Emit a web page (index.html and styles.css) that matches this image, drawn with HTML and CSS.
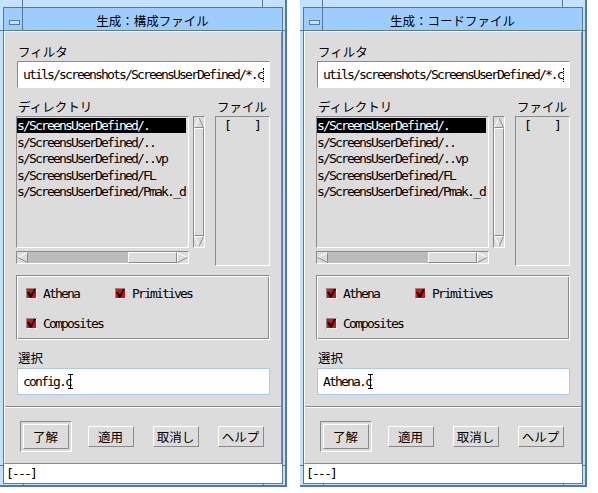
FILE: index.html
```html
<!DOCTYPE html>
<html lang="ja">
<head>
<meta charset="utf-8">
<title>生成</title>
<link rel="stylesheet" href="styles.css">
</head>
<body>
<div class="desk">

  <div class="win">
    <span class="notch nt1"></span><span class="notch nt2"></span>
    <span class="notch nb1"></span><span class="notch nb2"></span>
    <span class="notch nl1"></span><span class="notch nr1"></span>
    <span class="notch nl2"></span><span class="notch nr2"></span>
    <div class="frame">
      <div class="titlebar">
        <div class="menubtn"><span class="menubar"></span></div>
        <div class="title">生成：構成ファイル</div>
      </div>
      <div class="client">
        <div class="work">
          <div class="label lab-filter">フィルタ</div>
          <div class="field"><span class="mono">utils/screenshots/ScreensUserDefined/*.c</span><span class="caret-dot"></span></div>
          <div class="lists">
            <div class="dircol">
              <div class="label lab-col">ディレクトリ</div>
              <div class="dirrow">
                <div class="listbox dirlist">
                  <div class="row sel">s/ScreensUserDefined/.</div>
                  <div class="row">s/ScreensUserDefined/..</div>
                  <div class="row">s/ScreensUserDefined/..vp</div>
                  <div class="row">s/ScreensUserDefined/FL</div>
                  <div class="row">s/ScreensUserDefined/Pmak._d</div>
                </div>
                <div class="vscroll">
                  <svg class="arrow" width="10" height="11" viewBox="0 0 10 11"><polygon points="5,1 9.5,10.5 0.5,10.5" fill="#dcdcdc"/><polyline points="0.5,10.5 5,0.8" stroke="#fff" fill="none"/><polyline points="5,0.8 9.5,10.5 0.5,10.5" stroke="#8a8a8a" fill="none"/></svg>
                  <div class="vthumb"></div>
                  <svg class="arrow" width="10" height="11" viewBox="0 0 10 11"><polygon points="0.5,0.5 9.5,0.5 5,10" fill="#dcdcdc"/><polyline points="9.5,0.5 0.5,0.5 5,10.2" stroke="#fff" fill="none"/><polyline points="5,10.2 9.5,0.5" stroke="#8a8a8a" fill="none"/></svg>
                </div>
              </div>
              <div class="hscroll">
                <svg class="arrow" width="11" height="11" viewBox="0 0 11 11"><polygon points="0.8,5.5 10.5,0.5 10.5,10.5" fill="#dcdcdc"/><polyline points="10.5,0.5 0.8,5.5" stroke="#fff" fill="none"/><polyline points="0.8,5.5 10.5,10.5 10.5,0.5" stroke="#8a8a8a" fill="none"/></svg>
                <div class="htrough"><div class="hthumb"></div></div>
                <svg class="arrow" width="11" height="11" viewBox="0 0 11 11"><polygon points="0.5,0.5 10.2,5.5 0.5,10.5" fill="#dcdcdc"/><polyline points="0.5,10.5 0.5,0.5 10.2,5.5" stroke="#fff" fill="none"/><polyline points="10.2,5.5 0.5,10.5" stroke="#8a8a8a" fill="none"/></svg>
              </div>
            </div>
            <div class="filecol">
              <div class="label lab-col">ファイル</div>
              <div class="listbox filelist"><div class="frow">[    ]</div></div>
            </div>
          </div>
          <div class="types">
            <div class="chk"><span class="box"><svg width="9" height="9" viewBox="0 0 9 9"><polygon points="0,3 2.2,3 3.6,5.6 7,0 9,0 4.6,8.5 2.8,8.5" fill="#000"/></svg></span><span class="mono">Athena</span></div>
            <div class="chk"><span class="box"><svg width="9" height="9" viewBox="0 0 9 9"><polygon points="0,3 2.2,3 3.6,5.6 7,0 9,0 4.6,8.5 2.8,8.5" fill="#000"/></svg></span><span class="mono">Primitives</span></div>
            <div class="chk"><span class="box"><svg width="9" height="9" viewBox="0 0 9 9"><polygon points="0,3 2.2,3 3.6,5.6 7,0 9,0 4.6,8.5 2.8,8.5" fill="#000"/></svg></span><span class="mono">Composites</span></div>
          </div>
          <div class="label lab-sel">選択</div>
          <div class="field focus"><span class="mono">config.c</span><svg class="ibeam" width="5" height="15" viewBox="0 0 5 15"><path d="M0 0.5H5M0 14.5H5M2.5 0.5V14.5" stroke="#000" fill="none"/></svg></div>
        </div>
        <div class="buttons">
          <div class="cell"><div class="defwrap"><div class="btn btn-def">了解</div></div></div>
          <div class="cell"><div class="btn">適用</div></div>
          <div class="cell"><div class="btn">取消し</div></div>
          <div class="cell"><div class="btn">ヘルプ</div></div>
        </div>
      </div>
      <div class="status"><span class="mono">[---]</span></div>
    </div>
  </div>

  <div class="win">
    <span class="notch nt1"></span><span class="notch nt2"></span>
    <span class="notch nb1"></span><span class="notch nb2"></span>
    <span class="notch nl1"></span><span class="notch nr1"></span>
    <span class="notch nl2"></span><span class="notch nr2"></span>
    <div class="frame">
      <div class="titlebar">
        <div class="menubtn"><span class="menubar"></span></div>
        <div class="title">生成：コードファイル</div>
      </div>
      <div class="client">
        <div class="work">
          <div class="label lab-filter">フィルタ</div>
          <div class="field"><span class="mono">utils/screenshots/ScreensUserDefined/*.c</span><span class="caret-dot"></span></div>
          <div class="lists">
            <div class="dircol">
              <div class="label lab-col">ディレクトリ</div>
              <div class="dirrow">
                <div class="listbox dirlist">
                  <div class="row sel">s/ScreensUserDefined/.</div>
                  <div class="row">s/ScreensUserDefined/..</div>
                  <div class="row">s/ScreensUserDefined/..vp</div>
                  <div class="row">s/ScreensUserDefined/FL</div>
                  <div class="row">s/ScreensUserDefined/Pmak._d</div>
                </div>
                <div class="vscroll">
                  <svg class="arrow" width="10" height="11" viewBox="0 0 10 11"><polygon points="5,1 9.5,10.5 0.5,10.5" fill="#dcdcdc"/><polyline points="0.5,10.5 5,0.8" stroke="#fff" fill="none"/><polyline points="5,0.8 9.5,10.5 0.5,10.5" stroke="#8a8a8a" fill="none"/></svg>
                  <div class="vthumb"></div>
                  <svg class="arrow" width="10" height="11" viewBox="0 0 10 11"><polygon points="0.5,0.5 9.5,0.5 5,10" fill="#dcdcdc"/><polyline points="9.5,0.5 0.5,0.5 5,10.2" stroke="#fff" fill="none"/><polyline points="5,10.2 9.5,0.5" stroke="#8a8a8a" fill="none"/></svg>
                </div>
              </div>
              <div class="hscroll">
                <svg class="arrow" width="11" height="11" viewBox="0 0 11 11"><polygon points="0.8,5.5 10.5,0.5 10.5,10.5" fill="#dcdcdc"/><polyline points="10.5,0.5 0.8,5.5" stroke="#fff" fill="none"/><polyline points="0.8,5.5 10.5,10.5 10.5,0.5" stroke="#8a8a8a" fill="none"/></svg>
                <div class="htrough"><div class="hthumb"></div></div>
                <svg class="arrow" width="11" height="11" viewBox="0 0 11 11"><polygon points="0.5,0.5 10.2,5.5 0.5,10.5" fill="#dcdcdc"/><polyline points="0.5,10.5 0.5,0.5 10.2,5.5" stroke="#fff" fill="none"/><polyline points="10.2,5.5 0.5,10.5" stroke="#8a8a8a" fill="none"/></svg>
              </div>
            </div>
            <div class="filecol">
              <div class="label lab-col">ファイル</div>
              <div class="listbox filelist"><div class="frow">[    ]</div></div>
            </div>
          </div>
          <div class="types">
            <div class="chk"><span class="box"><svg width="9" height="9" viewBox="0 0 9 9"><polygon points="0,3 2.2,3 3.6,5.6 7,0 9,0 4.6,8.5 2.8,8.5" fill="#000"/></svg></span><span class="mono">Athena</span></div>
            <div class="chk"><span class="box"><svg width="9" height="9" viewBox="0 0 9 9"><polygon points="0,3 2.2,3 3.6,5.6 7,0 9,0 4.6,8.5 2.8,8.5" fill="#000"/></svg></span><span class="mono">Primitives</span></div>
            <div class="chk"><span class="box"><svg width="9" height="9" viewBox="0 0 9 9"><polygon points="0,3 2.2,3 3.6,5.6 7,0 9,0 4.6,8.5 2.8,8.5" fill="#000"/></svg></span><span class="mono">Composites</span></div>
          </div>
          <div class="label lab-sel">選択</div>
          <div class="field focus"><span class="mono">Athena.c</span><svg class="ibeam" width="5" height="15" viewBox="0 0 5 15"><path d="M0 0.5H5M0 14.5H5M2.5 0.5V14.5" stroke="#000" fill="none"/></svg></div>
        </div>
        <div class="buttons">
          <div class="cell"><div class="defwrap"><div class="btn btn-def">了解</div></div></div>
          <div class="cell"><div class="btn">適用</div></div>
          <div class="cell"><div class="btn">取消し</div></div>
          <div class="cell"><div class="btn">ヘルプ</div></div>
        </div>
      </div>
      <div class="status"><span class="mono">[---]</span></div>
    </div>
  </div>

</div>
</body>
</html>
```

FILE: styles.css
```css
* { box-sizing: border-box; }

body {
  margin: 0;
  background: #fff;
  color: #000;
  font-family: "Noto Sans CJK JP", "Noto Sans", sans-serif;
  font-size: 12px;
}

.desk {
  display: flex;
  align-items: flex-start;
  gap: 13px;
}

.mono {
  font-family: "DejaVu Sans Mono", "Liberation Mono", monospace;
  font-size: 13px;
  letter-spacing: -1.83px;
  white-space: pre;
}

/* ---------- window frame ---------- */
.win {
  position: relative;
  width: 287px;
  height: 487px;
  background: #c4e2fd;
  padding: 7px 2px 1px 3px;
  border-right: 2px solid #56799f;
  border-bottom: 2px solid #56799f;
}

.notch { position: absolute; background: #56799f; }
.nt1 { left: 22px; top: 0; width: 1px; height: 7px; }
.nt2 { left: 262px; top: 0; width: 1px; height: 7px; }
.nb1 { left: 23px; top: 484px; width: 1px; height: 3px; }
.nb2 { left: 263px; top: 484px; width: 1px; height: 3px; }
.nl1 { left: 0; top: 30px; width: 3px; height: 1px; }
.nr1 { left: 283px; top: 30px; width: 2px; height: 1px; }
.nl2 { left: 0; top: 465px; width: 3px; height: 1px; }
.nr2 { left: 283px; top: 465px; width: 2px; height: 1px; }

.frame {
  height: 100%;
  border: 1px solid #56799f;
  display: flex;
  flex-direction: column;
}

.titlebar {
  height: 23px;
  flex: 0 0 auto;
  display: flex;
  background: #9ccdfd;
  border-bottom: 1px solid #56799f;
}

.menubtn {
  width: 19px;
  border-right: 1px solid #56799f;
  display: flex;
  justify-content: center;
  padding-left: 3px;
}

.menubar {
  margin-top: 12px;
  width: 11px;
  height: 5px;
  background: #c4e2fd;
  border: 1px solid #56799f;
}

.title {
  flex: 1;
  text-align: center;
  padding-top: 3px;
  line-height: 19px;
  font-size: 12.5px;
}

/* ---------- client area ---------- */
.client {
  height: 433px;
  flex: 0 0 auto;
  background: #dcdcdc;
  border: 1px solid;
  border-color: #fff #8a8a8a #8a8a8a #fff;
  display: flex;
  flex-direction: column;
}

.work {
  height: 375px;
  padding-top: 13px;
  border-bottom: 1px solid #8a8a8a;
}

.label {
  font-size: 12.5px;
  line-height: 14px;
  height: 14px;
}

.lab-filter { margin-left: 13px; }
.lab-col { margin-left: 2px; margin-bottom: 2px; }
.lab-sel { margin: 11px 0 0 13px; }

.field {
  margin: 2px 11px 0 12px;
  height: 27px;
  background: #fff;
  border: 1px solid;
  border-color: #8a8a8a #fff #fff #8a8a8a;
  padding-left: 5px;
  display: flex;
  align-items: center;
  overflow: hidden;
}

.field.focus {
  margin-top: 3px;
  border-color: #a6cbef;
}

.caret-dot {
  width: 1px;
  height: 14px;
  border-left: 1px dotted #000;
}

.ibeam { margin-left: -3px; flex: 0 0 auto; }

/* ---------- lists ---------- */
.lists {
  display: flex;
  margin: 12px 0 0 11px;
}

.dircol { width: 189px; }

.dirrow { display: flex; }

.listbox {
  background: #dcdcdc;
  border: 1px solid;
  border-color: #8a8a8a #fff #fff #8a8a8a;
  overflow: hidden;
}

.dirlist {
  width: 173px;
  height: 132px;
  padding-top: 1px;
}

.row {
  height: 15px;
  line-height: 15px;
  margin: 0 2px 1.5px 0;
  font-family: "DejaVu Sans Mono", "Liberation Mono", monospace;
  font-size: 13px;
  letter-spacing: -1.83px;
  white-space: pre;
}

.row.sel { background: #000; color: #fff; }

.vscroll {
  margin-left: 4px;
  width: 12px;
  height: 132px;
  border: 1px solid;
  border-color: #8a8a8a #fff #fff #8a8a8a;
  display: flex;
  flex-direction: column;
}

.arrow { display: block; flex: 0 0 auto; }

.vthumb {
  flex: 1;
  border: 1px solid;
  border-color: #fff #8a8a8a #8a8a8a #fff;
}

.hscroll {
  margin-top: 3px;
  width: 173px;
  height: 13px;
  border: 1px solid;
  border-color: #8a8a8a #fff #fff #8a8a8a;
  display: flex;
}

.htrough {
  flex: 1;
  background: #bcbcbc;
  display: flex;
  justify-content: flex-end;
}

.hthumb {
  width: 49px;
  background: #dcdcdc;
  border: 1px solid;
  border-color: #fff #8a8a8a #8a8a8a #fff;
}

.filecol {
  margin-left: 10px;
  width: 55px;
}

.filelist {
  height: 150px;
  padding: 1px 0 0 8px;
}

.frow {
  line-height: 15px;
  font-family: "DejaVu Sans Mono", "Liberation Mono", monospace;
  font-size: 13px;
  letter-spacing: -1.83px;
  white-space: pre;
}

/* ---------- toggles ---------- */
.types {
  margin: 9px 11px 0 11px;
  height: 65px;
  border: 1px solid;
  border-color: #8a8a8a #fff #fff #8a8a8a;
  box-shadow: inset 1px 1px 0 #fff, inset -1px -1px 0 #8a8a8a;
  display: grid;
  grid-template-columns: 89px auto;
  grid-auto-rows: 14px;
  row-gap: 16px;
  padding: 10px 0 0 9px;
}

.chk {
  display: flex;
  align-items: center;
  height: 14px;
}

.box {
  width: 11px;
  height: 11px;
  background: #ff0000;
  border: 1px solid;
  border-color: #8a8a8a #fff #fff #8a8a8a;
  margin-right: 6px;
  display: flex;
}

.box svg { display: block; }

/* ---------- buttons ---------- */
.buttons {
  flex: 1;
  border-top: 1px solid #fff;
  display: grid;
  grid-template-columns: repeat(4, 65px);
  align-items: center;
  justify-items: center;
  padding: 2px 0 0 8px;
}

.btn {
  width: 46px;
  height: 21px;
  background: #dcdcdc;
  border: 1px solid;
  border-color: #fff #8a8a8a #8a8a8a #fff;
  text-align: center;
  line-height: 19px;
  font-size: 12.5px;
}

.defwrap {
  border: 1px solid;
  border-color: #8a8a8a #fff #fff #8a8a8a;
  padding: 2px;
}

.btn-def {
  height: 25px;
  line-height: 23px;
}

/* ---------- status ---------- */
.status {
  flex: 1;
  background: #fff;
  line-height: 18px;
  padding-left: 2px;
}
```
